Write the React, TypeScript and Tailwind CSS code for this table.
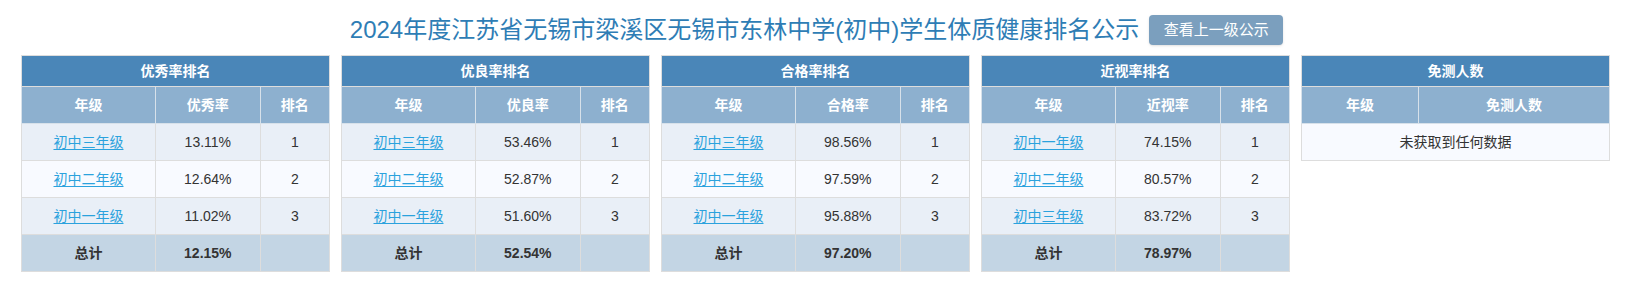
import React from 'react'

type Row = { grade: string; rate: string; rank: string }

interface RankTableProps {
  title: string
  rateLabel: string
  rows: Row[]
  total: string
}

const FONT = "font-['Liberation_Sans','Noto_Sans_CJK_SC',sans-serif]"

function RankTable({ title, rateLabel, rows, total }: RankTableProps) {
  return (
    <table className="w-full border-collapse border border-[#dddddd] text-[14px] text-center table-fixed">
      <colgroup>
        <col className="w-[43.5%]" />
        <col className="w-[34%]" />
        <col />
      </colgroup>
      <thead>
        <tr className="h-[31px] bg-[#4a86b8] text-white font-bold">
          <th colSpan={3} className="border border-[#dddddd]">{title}</th>
        </tr>
        <tr className="h-[37px] bg-[#8db0cf] text-white font-bold">
          <th className="border border-[#d7e1ea]">年级</th>
          <th className="border border-[#d7e1ea]">{rateLabel}</th>
          <th className="border border-[#d7e1ea]">排名</th>
        </tr>
      </thead>
      <tbody className="text-[#333333]">
        {rows.map((r, i) => (
          <tr key={r.grade} className={`h-[37px] ${i % 2 === 0 ? 'bg-[#e9eff7]' : 'bg-[#f8faff]'}`}>
            <td className="border border-[#dddddd]">
              <a href="#" className="text-[#2ba2dd] underline underline-offset-2">{r.grade}</a>
            </td>
            <td className="border border-[#dddddd]">{r.rate}</td>
            <td className="border border-[#dddddd]">{r.rank}</td>
          </tr>
        ))}
        <tr className="h-[37px] bg-[#c3d5e4] font-bold">
          <td className="border border-[#dddddd]">总计</td>
          <td className="border border-[#dddddd]">{total}</td>
          <td className="border border-[#dddddd]"></td>
        </tr>
      </tbody>
    </table>
  )
}

function ExemptTable() {
  return (
    <table className="w-full border-collapse border border-[#dddddd] text-[14px] text-center table-fixed">
      <colgroup>
        <col className="w-[38%]" />
        <col />
      </colgroup>
      <thead>
        <tr className="h-[31px] bg-[#4a86b8] text-white font-bold">
          <th colSpan={2} className="border border-[#dddddd]">免测人数</th>
        </tr>
        <tr className="h-[37px] bg-[#8db0cf] text-white font-bold">
          <th className="border border-[#d7e1ea]">年级</th>
          <th className="border border-[#d7e1ea]">免测人数</th>
        </tr>
      </thead>
      <tbody className="text-[#333333]">
        <tr className="h-[37px] bg-[#f8faff]">
          <td colSpan={2} className="border border-[#dddddd]">未获取到任何数据</td>
        </tr>
      </tbody>
    </table>
  )
}

const tables: RankTableProps[] = [
  {
    title: '优秀率排名',
    rateLabel: '优秀率',
    rows: [
      { grade: '初中三年级', rate: '13.11%', rank: '1' },
      { grade: '初中二年级', rate: '12.64%', rank: '2' },
      { grade: '初中一年级', rate: '11.02%', rank: '3' },
    ],
    total: '12.15%',
  },
  {
    title: '优良率排名',
    rateLabel: '优良率',
    rows: [
      { grade: '初中三年级', rate: '53.46%', rank: '1' },
      { grade: '初中二年级', rate: '52.87%', rank: '2' },
      { grade: '初中一年级', rate: '51.60%', rank: '3' },
    ],
    total: '52.54%',
  },
  {
    title: '合格率排名',
    rateLabel: '合格率',
    rows: [
      { grade: '初中三年级', rate: '98.56%', rank: '1' },
      { grade: '初中二年级', rate: '97.59%', rank: '2' },
      { grade: '初中一年级', rate: '95.88%', rank: '3' },
    ],
    total: '97.20%',
  },
  {
    title: '近视率排名',
    rateLabel: '近视率',
    rows: [
      { grade: '初中一年级', rate: '74.15%', rank: '1' },
      { grade: '初中二年级', rate: '80.57%', rank: '2' },
      { grade: '初中三年级', rate: '83.72%', rank: '3' },
    ],
    total: '78.97%',
  },
]

export default function App() {
  return (
    <div className={`w-[1633px] h-[295px] bg-white ${FONT}`}>
      <div className="flex items-center justify-center gap-[10px] pt-[15px] h-[45px]">
        <h1 className="text-[24px] leading-[30px] text-[#2e7db5]">
          2024年度江苏省无锡市梁溪区无锡市东林中学(初中)学生体质健康排名公示
        </h1>
        <button className="h-[30px] w-[134px] rounded-[4px] bg-[#7b9fbe] text-white text-[15px] shadow-sm">
          查看上一级公示
        </button>
      </div>
      <div className="flex items-start gap-[11px] pl-[21px] pr-[23px] mt-[10px]">
        {tables.map((t) => (
          <div key={t.title} className="flex-1">
            <RankTable {...t} />
          </div>
        ))}
        <div className="flex-1">
          <ExemptTable />
        </div>
      </div>
    </div>
  )
}
